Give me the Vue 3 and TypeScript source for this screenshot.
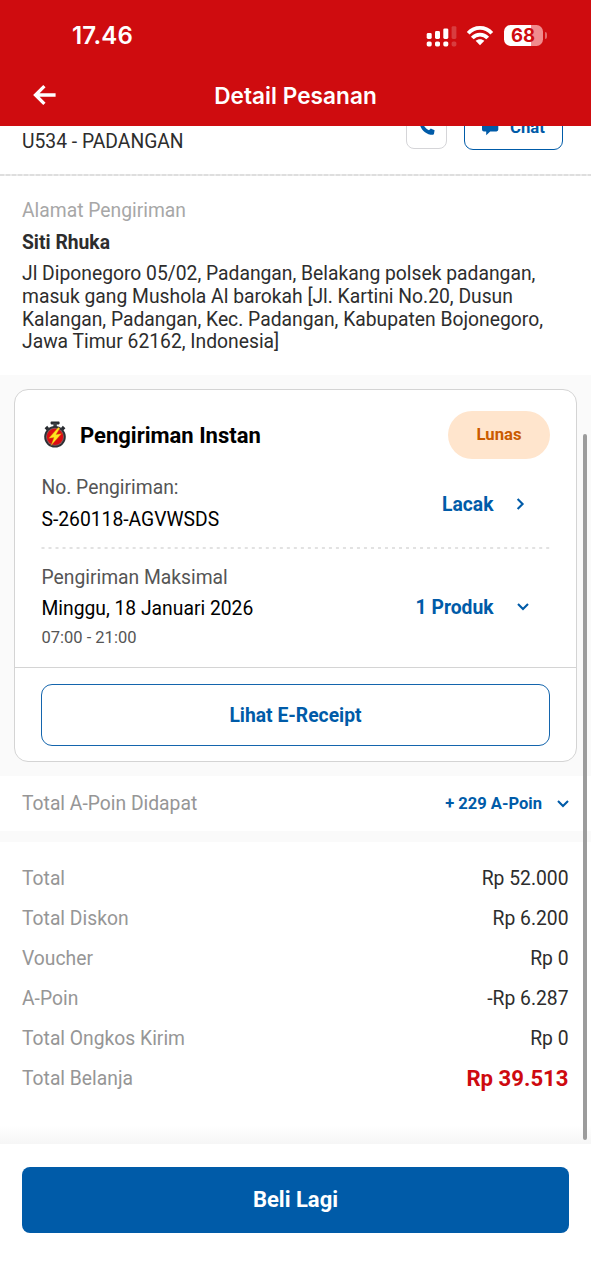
<script setup lang="ts">
interface SummaryRow {
  label: string
  value: string
  grand?: boolean
}

const summary: SummaryRow[] = [
  { label: 'Total', value: 'Rp 52.000' },
  { label: 'Total Diskon', value: 'Rp 6.200' },
  { label: 'Voucher', value: 'Rp 0' },
  { label: 'A-Poin', value: '-Rp 6.287' },
  { label: 'Total Ongkos Kirim', value: 'Rp 0' },
  { label: 'Total Belanja', value: 'Rp 39.513', grand: true },
]

const addressLines: string[] = [
  'Jl Diponegoro 05/02, Padangan, Belakang polsek padangan,',
  'masuk gang Mushola Al barokah [Jl. Kartini No.20, Dusun',
  'Kalangan, Padangan, Kec. Padangan, Kabupaten Bojonegoro,',
  'Jawa Timur 62162, Indonesia]',
]
</script>

<template>
  <div class="screen">
    <header class="header">
      <div class="status">
        <span class="clock">17.46</span>
        <div class="indicators">
          <svg class="signal" width="31" height="22" viewBox="0 0 31 22">
            <g fill="#fff">
              <rect x="0.7" y="8" width="5" height="6" rx="1.4" />
              <rect x="9" y="6" width="5" height="8" rx="1.4" />
              <rect x="17.3" y="3.4" width="5" height="10.6" rx="1.4" />
              <rect x="0.7" y="16.4" width="5" height="5" rx="1.6" />
              <rect x="9" y="16.4" width="5" height="5" rx="1.6" />
              <rect x="17.3" y="16.4" width="5" height="5" rx="1.6" />
            </g>
            <g fill="#fff" opacity="0.2">
              <rect x="25.6" y="1.2" width="4.8" height="12.8" rx="1.4" />
              <rect x="25.6" y="16.4" width="4.8" height="5" rx="1.6" />
            </g>
          </svg>
          <svg class="wifi" width="28" height="21" viewBox="0 0 28 21">
            <g fill="none" stroke="#fff" stroke-width="3.8">
              <path d="M2.2 8.2 C8.7 1.1 19.3 1.1 25.8 8.2" />
              <path d="M6.3 13 C10.6 8.4 17.4 8.4 21.7 13" />
            </g>
            <path d="M14 20.2 L9.6 15.8 C12 13.6 16 13.6 18.4 15.8 Z" fill="#fff" />
          </svg>
          <div class="battery"><span>68</span></div>
          <i class="battery-tip"></i>
        </div>
      </div>
      <div class="nav">
        <svg class="back" width="24" height="22" viewBox="0 0 24 22">
          <path d="M11.4 2.2 L2.5 11 L11.4 19.8 M3 11 H22.6" fill="none" stroke="#fff" stroke-width="3.3" />
        </svg>
        <h1>Detail Pesanan</h1>
      </div>
    </header>

    <main class="content">
      <section class="store">
        <span class="store-name">U534 - PADANGAN</span>
        <div class="store-actions">
          <button class="call" aria-label="Telepon">
            <svg width="16" height="16" viewBox="0 0 16 16">
              <path d="M1.2 1 L4.7 0.3 L6.5 4.1 L4.6 6 C5.6 8.2 7.7 10.3 10 11.3 L11.8 9.4 L15.6 11.2 L15 14.7 C14.8 15.5 14.2 15.8 13.6 15.8 C6.3 15.8 0.4 9.6 0.4 2.2 C0.4 1.6 0.7 1.1 1.2 1 Z" fill="#005ba8" />
            </svg>
          </button>
          <button class="chat">
            <svg width="18" height="18" viewBox="0 0 18 18">
              <path d="M3 0.5 H15 Q17.3 0.5 17.3 2.8 V11.6 Q17.3 13.4 15.5 13.4 H9.2 L5.2 17.2 V13.4 H3 Q1 13.4 1 11.4 V2.5 Q1 0.5 3 0.5 Z" fill="#005ba8" />
              <circle cx="5.4" cy="7" r="1" fill="#fff" />
              <circle cx="9.1" cy="7" r="1" fill="#fff" />
              <circle cx="12.8" cy="7" r="1" fill="#fff" />
            </svg>
            <span>Chat</span>
          </button>
        </div>
      </section>
      <svg class="store-rule" width="591" height="2" viewBox="0 0 591 2">
        <path d="M0 1 H591" stroke="#ebebeb" stroke-width="2" />
        <path d="M0 1 H591" stroke="#dadada" stroke-width="1.4" stroke-dasharray="4 2" />
      </svg>

      <section class="address">
        <p class="muted">Alamat Pengiriman</p>
        <p class="recipient">Siti Rhuka</p>
        <div class="address-text">
          <p v-for="line in addressLines" :key="line">{{ line }}</p>
        </div>
      </section>

      <section class="shipment">
        <article class="card">
          <div class="card-head">
            <svg class="stopwatch" width="24" height="28" viewBox="0 0 24 28">
              <rect x="7.6" y="0.6" width="9" height="2.8" rx="0.8" fill="#292c31" />
              <rect x="10.4" y="2" width="3.4" height="5" fill="#3c3f44" />
              <path d="M1.6 7.2 L4.2 4.8 L6.2 7.2 L3.8 9.4 Z M22.4 7.2 L19.8 4.8 L17.8 7.2 L20.2 9.4 Z" fill="#292c31" />
              <circle cx="12" cy="15.8" r="10.8" fill="#2d3035" />
              <circle cx="12" cy="15.8" r="9" fill="#8e5a5c" />
              <circle cx="12" cy="15.8" r="8.1" fill="#dc0c12" />
              <path d="M15.2 6.6 L5.8 17.2 L11 16.6 L8 24.6 L18.4 12.8 L13 13.6 L16.8 7.2 Z" fill="#ffe51f" stroke="#d5840c" stroke-width="0.4" />
            </svg>
            <h2>Pengiriman Instan</h2>
            <span class="badge">Lunas</span>
          </div>

          <div class="row track">
            <div>
              <p class="label">No. Pengiriman:</p>
              <p class="value code">S-260118-AGVWSDS</p>
            </div>
            <a class="link"><span>Lacak</span>
              <svg width="14" height="14" viewBox="0 0 14 14"><path d="M4.6 2 L9.6 7 L4.6 12" fill="none" stroke="#005ba8" stroke-width="2.1" /></svg>
            </a>
          </div>

          <svg class="dots" width="509" height="2" viewBox="0 0 509 2">
            <path d="M0.5 1 H509" stroke="#e2e2e2" stroke-width="2" stroke-dasharray="3 4.01" />
          </svg>

          <div class="row delivery">
            <div>
              <p class="label">Pengiriman Maksimal</p>
              <p class="value date">Minggu, 18 Januari 2026</p>
              <p class="hours">07:00 - 21:00</p>
            </div>
            <a class="link product"><span>1 Produk</span>
              <svg width="14" height="14" viewBox="0 0 14 14"><path d="M2 4.1 L7 9.1 L12 4.1" fill="none" stroke="#005ba8" stroke-width="2.1" /></svg>
            </a>
          </div>

          <footer class="card-foot">
            <button class="outline">Lihat E-Receipt</button>
          </footer>
        </article>
      </section>

      <section class="points">
        <span class="muted points-label">Total A-Poin Didapat</span>
        <a class="points-link"><span>+ 229 A-Poin</span>
          <svg width="14" height="14" viewBox="0 0 14 14"><path d="M2 4 L7 9 L12 4" fill="none" stroke="#005ba8" stroke-width="2.1" /></svg>
        </a>
      </section>

      <section class="summary">
        <div v-for="row in summary" :key="row.label" class="sum-row">
          <span class="muted">{{ row.label }}</span>
          <span :class="row.grand ? 'grand' : 'amount'">{{ row.value }}</span>
        </div>
      </section>
      <i class="scrollbar"></i>
    </main>

    <footer class="bottom">
      <button class="primary">Beli Lagi</button>
    </footer>
  </div>
</template>

<style>
body {
  margin: 0;
  background: #fff;
}
</style>

<style scoped>
* {
  box-sizing: border-box;
}
p, h1, h2 {
  margin: 0;
  white-space: nowrap;
}
svg {
  display: block;
  flex: none;
}
button {
  font-family: inherit;
  padding: 0;
}
.screen {
  width: 591px;
  height: 1280px;
  display: flex;
  flex-direction: column;
  overflow: hidden;
  background: #fff;
  font-family: Roboto, "Liberation Sans", sans-serif;
  font-size: 19.3px;
  color: #2d2d2d;
}
.header {
  height: 126px;
  flex: none;
  background: #cf0c0f;
  color: #fff;
  font-family: Inter, "Liberation Sans", sans-serif;
}
.status {
  height: 66px;
  padding: 5px 44.5px 0 72px;
  display: flex;
  align-items: center;
  justify-content: space-between;
}
.clock {
  font-size: 24px;
  font-weight: 600;
  letter-spacing: 0.2px;
}
.indicators {
  display: flex;
  align-items: center;
}
.wifi {
  margin: -1px 9.5px 0 9.5px;
}
.battery {
  width: 39px;
  height: 21px;
  border-radius: 6.5px;
  background: linear-gradient(90deg, #fff 0 68%, #f08c8d 68%);
  color: #cf0c0f;
  font-size: 18.5px;
  font-weight: 700;
  line-height: 21px;
  text-align: center;
}
.battery-tip {
  width: 2px;
  height: 7px;
  margin-left: 2px;
  border-radius: 0 3px 3px 0;
  background: #e56a6b;
}
.nav {
  height: 58px;
  display: grid;
  grid-template-columns: 1fr auto 1fr;
  align-items: center;
}
.back {
  margin-left: 32.5px;
}
.nav h1 {
  font-size: 22.6px;
  font-weight: 600;
  letter-spacing: 0.05px;
}
.content {
  position: relative;
  height: 1018px;
  flex: none;
  overflow: hidden;
}
.store {
  height: 48px;
  padding: 0 28px 0 22px;
  display: flex;
  justify-content: space-between;
}
.store-name {
  line-height: 32px;
}
.store-actions {
  display: flex;
  gap: 17px;
  align-items: flex-end;
  height: 23.5px;
}
.call, .chat {
  display: flex;
  align-items: center;
  justify-content: center;
  flex: none;
  background: #fff;
}
.call {
  width: 41px;
  height: 44px;
  margin-bottom: 1px;
  border: 1.5px solid #d5d5d8;
  border-radius: 8px;
}
.chat {
  width: 99px;
  height: 46px;
  gap: 11.5px;
  padding: 1px 1.5px 0 0;
  border: 1.5px solid #005ba8;
  border-radius: 9px;
  color: #005ba8;
  font-size: 16.7px;
  font-weight: 700;
}
.address {
  height: 199px;
  padding: 23px 22px 0;
}
.muted {
  color: #969696;
  line-height: 24px;
}
.address .muted {
  color: #a7a7a7;
}
.recipient {
  margin-top: 8px;
  line-height: 24px;
  font-weight: 700;
}
.address-text {
  margin-top: 8.4px;
  line-height: 22.6px;
}
.shipment {
  height: 401px;
  padding: 14px 14px 0;
  background: #fafafa;
}
.card {
  height: 373px;
  border: 1.5px solid #d4d4d4;
  border-radius: 14px;
  background: #fff;
}
.card-head {
  display: flex;
  align-items: center;
  height: 48px;
  margin: 21px 26px 0 28px;
}
.card-head h2 {
  margin-left: 13px;
  color: #000;
  font-size: 22px;
  font-weight: 700;
}
.badge {
  width: 102px;
  height: 48px;
  margin-left: auto;
  border-radius: 24px;
  background: #ffe5cd;
  color: #ca5b00;
  font-size: 16.7px;
  font-weight: 700;
  line-height: 48px;
  text-align: center;
}
.row {
  display: flex;
  justify-content: space-between;
  padding: 0 46px 0 26.5px;
}
.track {
  height: 88px;
  padding-top: 17px;
}
.label {
  color: #555;
  line-height: 24px;
}
.value {
  margin-top: 8px;
  color: #000;
  line-height: 24px;
}
.date {
  margin-top: 7px;
}
.hours {
  margin-top: 5px;
  color: #555;
  font-size: 16.5px;
  line-height: 24px;
}
.link {
  display: flex;
  align-items: center;
  height: 24px;
  margin-top: 16px;
  gap: 22.5px;
  color: #005ba8;
  font-weight: 700;
}
.delivery {
  height: 118px;
  padding-top: 17px;
}
.product {
  margin-top: 29px;
}
.dots {
  margin-left: 26px;
}
.track .link {
  margin-right: 3px;
  gap: 19.5px;
}
.card-foot {
  height: 93px;
  padding: 16px 26px 0 26px;
  border-top: 1.5px solid #d4d4d4;
}
.outline {
  width: 100%;
  height: 62px;
  border: 1.5px solid #1465ad;
  border-radius: 11px;
  background: #fff;
  color: #005ba8;
  font-size: 19.3px;
  font-weight: 700;
}
.points {
  height: 55px;
  padding: 0 21px 0 22px;
  display: flex;
  align-items: center;
  justify-content: space-between;
}
.points-label {
  padding-top: 1px;
}
.points-link {
  display: flex;
  align-items: center;
  gap: 14px;
  color: #005ba8;
  font-size: 16.55px;
  font-weight: 700;
}
.summary {
  height: 313px;
  padding: 16px 22.5px 0 22px;
  border-top: 11px solid #fafafa;
  background: linear-gradient(180deg, #fff 0 94%, #f6f6f6 100%);
}
.sum-row {
  height: 40px;
  display: flex;
  align-items: center;
  justify-content: space-between;
}
.sum-row .muted {
  padding-top: 1px;
}
.grand {
  color: #ce0a0f;
  font-size: 22.15px;
  font-weight: 700;
}
.scrollbar {
  position: absolute;
  right: 4px;
  top: 308px;
  width: 4px;
  height: 706px;
  border-radius: 2px;
  background: #9c9c9c;
}
.bottom {
  flex: 1;
  padding: 23px 22px 0;
  background: #fff;
}
.primary {
  width: 100%;
  height: 66px;
  padding-bottom: 1px;
  border: 0;
  border-radius: 8px;
  background: #005ba8;
  color: #fff;
  font-size: 22px;
  font-weight: 700;
}
</style>
